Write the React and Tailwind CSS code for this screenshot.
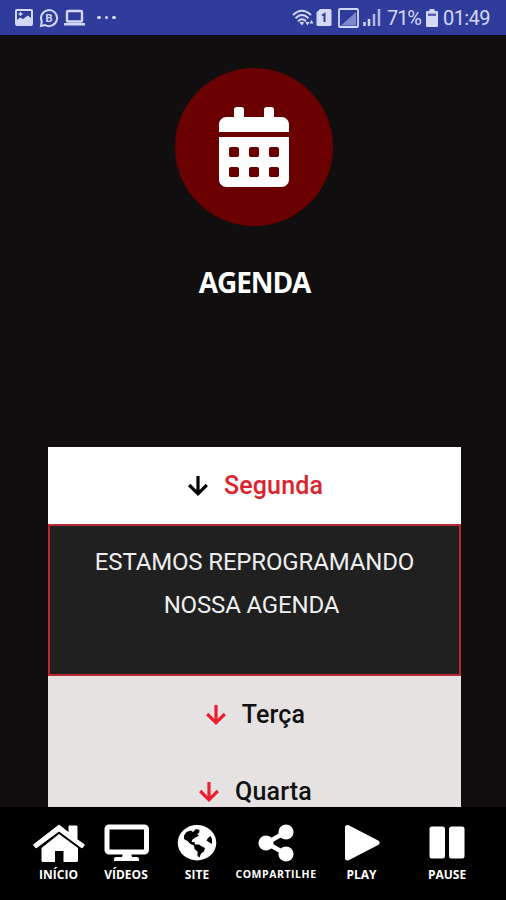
import { FaCalendarAlt } from "react-icons/fa";

const ArrowDown = ({ className }) => (
  <svg viewBox="0 0 22 22" className={`w-[22px] h-[22px] shrink-0 ${className}`}>
    <path
      d="M11 1V19M2.200 10L11 18.800L19.800 10"
      fill="none"
      stroke="currentColor"
      strokeWidth="3.2"
    />
  </svg>
);

const HomeIcon = () => (
  <svg viewBox="0 0 54 40" className="w-[54px] h-[40px]">
    <path
      d="M27 2L37 10V3H45V16.500L52.500 21.800L50 25L27 8L4 25L1.500 21.800Z"
      fill="currentColor"
      stroke="currentColor"
      strokeLinejoin="round"
    />
    <path d="M27 11L46 25V37.500Q46 39 44.500 39H31.500V28H23V39H11Q9.500 39 9.500 37.500V25Z" fill="currentColor" />
  </svg>
);

const MonitorIcon = () => (
  <svg viewBox="0 0 45 38" className="w-[45px] h-[38px]">
    <rect x="3" y="3" width="39.500" height="25" rx="2" fill="none" stroke="currentColor" strokeWidth="5" />
    <path d="M19 29H27L28 33H33Q35 33 35 35V37H10V35Q10 33 12 33H18Z" fill="currentColor" />
  </svg>
);

const GlobeIcon = () => (
  <svg viewBox="0 0 40 38" className="w-[40px] h-[38px]">
    <ellipse cx="20" cy="18.700" rx="19.300" ry="17.700" fill="currentColor" />
    <path
      d="M19 5L22.500 6L22 9L20 10L22 11.500L18.500 13.500L15.500 15.500L14.500 18L17.500 18L18 20.500H22L25 22.500L28 24L27 27.500L24 29.500L22.500 33.500L20.500 32V27.500L17.500 25L17 21.500L13.500 20L10.500 17L7 15L7 11.500L9.500 8L14 6.500L16 8Z"
      fill="#000"
    />
    <path d="M33.500 12L35 15V20L32.500 18.500L29.500 16.500L31 14Z" fill="#000" />
  </svg>
);

const ShareIcon = () => (
  <svg viewBox="0 0 36 38" className="w-[36px] h-[38px]">
    <path d="M28 8L8.500 19L28 30" fill="none" stroke="currentColor" strokeWidth="4.500" />
    <circle cx="28" cy="8" r="7.600" fill="currentColor" />
    <circle cx="8" cy="19" r="7.600" fill="currentColor" />
    <circle cx="28" cy="30" r="7.600" fill="currentColor" />
  </svg>
);

const PlayIcon = () => (
  <svg viewBox="0 0 36 38" className="w-[36px] h-[38px]">
    <path d="M3.500 3.500V34L33 18.700Z" fill="currentColor" stroke="currentColor" strokeWidth="5" strokeLinejoin="round" />
  </svg>
);

const PauseIcon = () => (
  <svg viewBox="0 0 36 38" className="w-[36px] h-[38px]">
    <rect x="0.500" y="2.500" width="15.500" height="32" rx="2.500" fill="currentColor" />
    <rect x="20" y="2.500" width="15.500" height="32" rx="2.500" fill="currentColor" />
  </svg>
);

const navItems = [
  { label: "INÍCIO", icon: HomeIcon, width: "w-[67px]", text: "text-[12px]" },
  { label: "VÍDEOS", icon: MonitorIcon, width: "w-[68px]", text: "text-[12px]" },
  { label: "SITE", icon: GlobeIcon, width: "w-[74px]", text: "text-[12px]" },
  { label: "COMPARTILHE", icon: ShareIcon, width: "w-[84px]", text: "text-[10.5px] tracking-[0.550px]" },
  { label: "PLAY", icon: PlayIcon, width: "w-[87px]", text: "text-[12px]" },
  { label: "PAUSE", icon: PauseIcon, width: "w-[84px]", text: "text-[12px]" },
];

const StatusBar = () => (
  <header className="h-[35px] shrink-0 bg-[#303c9c] text-[#d3d9f5] flex items-center justify-between pl-[15px] pr-[16px]">
    <div className="flex items-center">
      <svg viewBox="0 0 18 17" className="w-[18px] h-[17px]">
        <rect x="1" y="1" width="16" height="15" rx="1" fill="none" stroke="currentColor" strokeWidth="2" />
        <path d="M2 11L5 8.500L8 10L13 6.500L16 9V15H2Z" fill="currentColor" />
        <path d="M5.500 3V7M3.500 5H7.500" stroke="currentColor" strokeWidth="1.300" />
      </svg>
      <svg viewBox="0 0 20 20" className="w-[20px] h-[20px] ml-[6px]">
        <path d="M2 18L2.800 13.500A8 8 0 1 1 6 17Z" fill="none" stroke="currentColor" strokeWidth="2" />
        <text x="10" y="13.800" fontSize="11" fontWeight="700" textAnchor="middle" fill="currentColor">
          B
        </text>
      </svg>
      <svg viewBox="0 0 21 17" className="w-[21px] h-[17px] ml-[5px]">
        <rect x="3" y="2" width="15" height="10.500" rx="1" fill="none" stroke="currentColor" strokeWidth="2.400" />
        <path d="M0 14H21V16.500H0Z" fill="currentColor" />
      </svg>
      <div className="flex gap-[4px] ml-[12px]">
        <span className="w-[3.500px] h-[3.500px] rounded-full bg-current" />
        <span className="w-[3.500px] h-[3.500px] rounded-full bg-current" />
        <span className="w-[3.500px] h-[3.500px] rounded-full bg-current" />
      </div>
    </div>

    <div className="flex items-center">
      <svg viewBox="0 0 22 18" className="w-[22px] h-[18px]">
        <path
          d="M1 6Q10 -2.500 19 6M3.500 9.200Q10 3 16.500 9.200M6 12.200Q10 8.500 14 12.200"
          fill="none"
          stroke="currentColor"
          strokeWidth="1.900"
        />
        <path d="M7.500 13.500Q10 12 12 13.500L10 16.500Z" fill="currentColor" />
        <path d="M13.500 13H17.500L15.500 16.500ZM17.500 14.500H21.500L19.500 11Z" fill="currentColor" />
      </svg>
      <svg viewBox="0 0 16 17" className="w-[16px] h-[17px] ml-[2px]">
        <path d="M4 0H14Q15.500 0 15.500 1.500V15.500Q15.500 17 14 17H2Q0.500 17 0.500 15.500V3.500Z" fill="currentColor" />
        <path d="M6 6.500L8.500 5V13" fill="none" stroke="#303c9c" strokeWidth="2" />
      </svg>
      <svg viewBox="0 0 21 20" className="w-[21px] h-[20px] ml-[6px]">
        <rect x="1" y="1" width="19" height="18" rx="1" fill="none" stroke="currentColor" strokeWidth="1.800" />
        <path d="M3 17.500L18 4V17.500Z" fill="#7d88cc" />
      </svg>
      <svg viewBox="0 0 18 17" className="w-[18px] h-[17px] ml-[4px]">
        <path d="M1.500 13V17M6 10V17" stroke="currentColor" strokeWidth="2.500" />
        <path d="M11 5V17M16 0V17" stroke="#aeb7e6" strokeWidth="2.500" />
      </svg>
      <span className="w-[34px] ml-[6px] text-[20px] leading-none tracking-[-1.100px] whitespace-nowrap">71%</span>
      <svg viewBox="0 0 12 18" className="w-[12px] h-[18px] ml-[5px]">
        <path d="M3.500 0H8.500V2H11Q12 2 12 3V17Q12 18 11 18H1Q0 18 0 17V3Q0 2 1 2H3.500Z" fill="currentColor" />
        <path d="M2 4.500H10V7H2Z" fill="#5863b3" />
      </svg>
      <span className="w-[47px] ml-[5px] text-[20px] leading-none tracking-[-0.600px] whitespace-nowrap">01:49</span>
    </div>
  </header>
);

const DayRow = ({ label, active }) => (
  <div
    className={`h-[77px] shrink-0 flex items-center justify-center gap-[15px] pl-px text-[25px] font-medium tracking-[0.150px] ${
      active ? "bg-white text-[#dc232d] pt-px" : "bg-[#e6e2e1] text-[#111111]"
    }`}
  >
    <ArrowDown className={active ? "text-black" : "text-[#eb1f30]"} />
    <span>{label}</span>
  </div>
);

export default function App() {
  return (
    <div className="w-[506px] h-[900px] overflow-hidden bg-[#100e0f] flex flex-col font-['Roboto',sans-serif]">
      <StatusBar />

      <main className="flex-1 min-h-0 overflow-hidden flex flex-col items-center pt-[33px]">
        <div className="w-[158px] h-[158px] shrink-0 rounded-full bg-[#6b0000] text-white flex items-center justify-center ml-[2px]">
          <FaCalendarAlt className="w-[70px] h-[80px]" />
        </div>
        <h1 className="mt-[36px] ml-[3px] h-[40px] shrink-0 leading-[40px] text-[28px] font-bold text-white tracking-[-1.100px] font-['Open_Sans',sans-serif]">
          AGENDA
        </h1>

        <section className="mt-[145px] w-[413px] mr-[-3px] shrink-0 flex flex-col">
          <DayRow label="Segunda" active />
          <div className="h-[152px] shrink-0 bg-[#202020] border-2 border-[#b92b30] pt-[15px] text-center text-[24px] leading-[43px] tracking-[-0.150px] text-[#eeeeee]">
            <p>ESTAMOS REPROGRAMANDO</p>
            <p className="mr-[6px]">NOSSA AGENDA</p>
          </div>
          <DayRow label="Terça" />
          <DayRow label="Quarta" />
        </section>
      </main>

      <nav className="h-[93px] shrink-0 bg-black text-white flex pl-[25px] pt-[15px]">
        {navItems.map(({ label, icon: Icon, width, text }) => (
          <div key={label} className={`${width} shrink-0 flex flex-col items-center`}>
            <div className="h-[42px] flex items-center justify-center">
              <Icon />
            </div>
            <span
              className={`mt-[2px] leading-[17px] font-bold whitespace-nowrap font-['Open_Sans',sans-serif] ${text}`}
            >
              {label}
            </span>
          </div>
        ))}
      </nav>
    </div>
  );
}
